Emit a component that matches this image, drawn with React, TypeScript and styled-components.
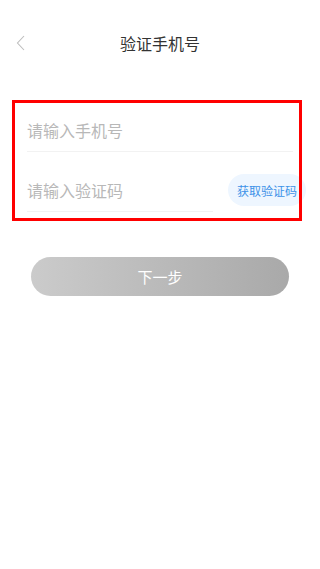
import styled, { createGlobalStyle } from "styled-components";

const GlobalStyle = createGlobalStyle`
  body {
    margin: 0;
    background: #fff;
    font-family: "Noto Sans CJK SC", "Noto Sans", sans-serif;
  }
`;

const Page = styled.div`
  width: 320px;
  min-height: 569px;
  background: #fff;
`;

const Header = styled.div`
  position: relative;
  height: 40px;
  margin-top: 23px;
  display: flex;
  align-items: center;
  justify-content: center;
`;

const Back = styled.button`
  position: absolute;
  left: 12px;
  top: 10px;
  width: 16px;
  height: 20px;
  padding: 0;
  border: none;
  background: none;
  display: flex;
  align-items: center;
  justify-content: center;
`;

const Title = styled.div`
  font-size: 16px;
  color: #333;
  line-height: 20px;
`;

const Form = styled.div`
  margin: 40px 21px 0 15px;
  outline: 3px solid #ff0000;
  padding-bottom: 6px;
`;

const Row = styled.div`
  display: flex;
  align-items: center;
  height: 60px;
`;

const PhoneRow = styled.div`
  margin: 0 6px 0 12px;
  padding: 17px 0 11px;
  border-bottom: 1px solid #f2f2f2;
`;

const Field = styled.input<{ $underline?: boolean }>`
  display: block;
  flex: 1;
  min-width: 0;
  align-self: stretch;
  box-sizing: border-box;
  width: 100%;
  border: none;
  border-bottom: ${(p) => (p.$underline ? "1px solid #f2f2f2" : "none")};
  outline: none;
  padding: ${(p) => (p.$underline ? "17px 0 0" : "0")};
  margin: 0;
  font-family: inherit;
  font-size: 16px;
  line-height: 20px;
  height: ${(p) => (p.$underline ? "60px" : "20px")};
  color: #333;
  background: transparent;
  &::placeholder {
    color: #b8b8b8;
  }
`;

const CodeInputWrap = styled.div`
  width: 186px;
  margin-left: 12px;
  align-self: stretch;
  display: flex;
`;

const CodeButton = styled.button`
  margin: 16px -7px 0 15px;
  height: 32px;
  width: 78px;
  padding: 0;
  border: none;
  border-radius: 16px;
  background: #eef6ff;
  color: #3d92e8;
  font-family: inherit;
  font-size: 12px;
  white-space: nowrap;
`;

const NextButton = styled.button`
  display: block;
  margin: 39px 0 0 31px;
  width: 258px;
  height: 39px;
  border: none;
  border-radius: 20px;
  background: linear-gradient(90deg, #cbcbcb 0%, #a9a9a9 100%);
  color: #fff;
  font-family: inherit;
  font-size: 15px;
`;

const App = () => {
  return (
    <Page>
      <GlobalStyle />
      <Header>
        <Back aria-label="返回">
          <svg width="9" height="16" viewBox="0 0 9 16" fill="none">
            <path d="M8 1L1.5 8L8 15" stroke="#bdbdbd" strokeWidth="1.1" />
          </svg>
        </Back>
        <Title>验证手机号</Title>
      </Header>
      <Form>
        <PhoneRow>
          <Field placeholder="请输入手机号" />
        </PhoneRow>
        <Row>
          <CodeInputWrap>
            <Field $underline placeholder="请输入验证码" />
          </CodeInputWrap>
          <CodeButton>获取验证码</CodeButton>
        </Row>
      </Form>
      <NextButton>下一步</NextButton>
    </Page>
  );
};

export default App;
